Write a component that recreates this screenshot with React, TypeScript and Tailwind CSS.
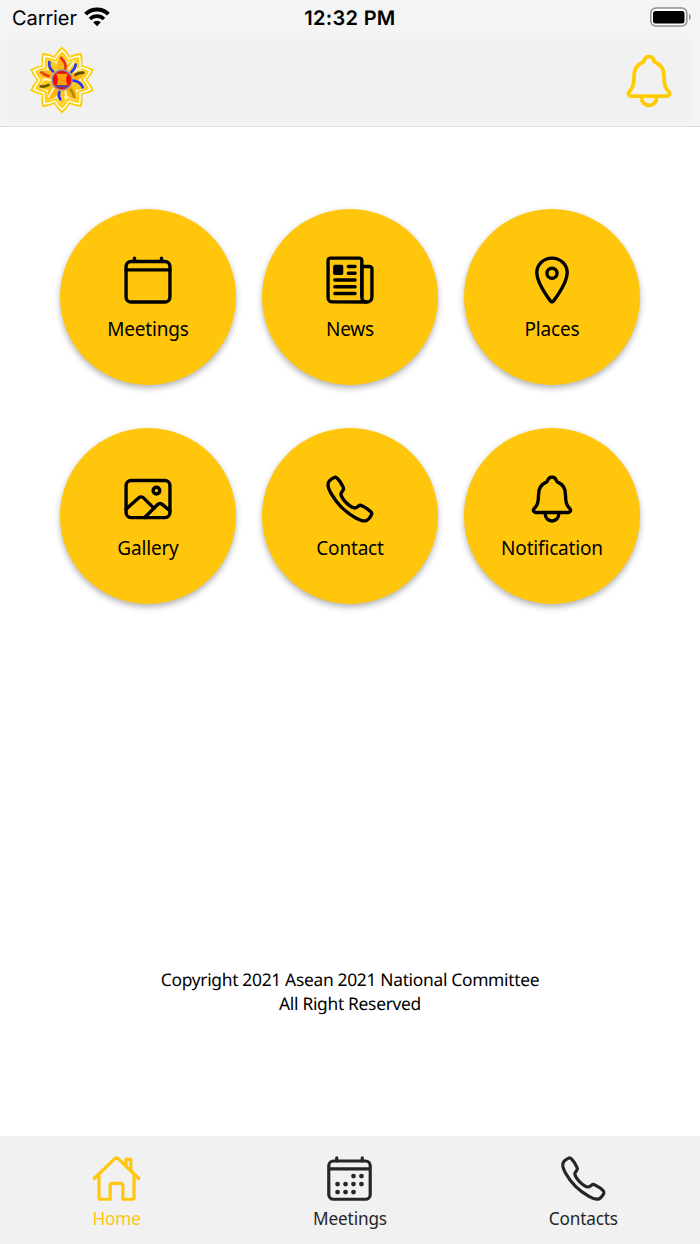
import type { IconType } from "react-icons";
import {
  IoCalendarClearOutline,
  IoCalendarOutline,
  IoCallOutline,
  IoHomeOutline,
  IoImageOutline,
  IoLocationOutline,
  IoNewspaperOutline,
  IoNotificationsOutline,
} from "react-icons/io5";

type Item = { label: string; icon: IconType };

const menu: Item[] = [
  { label: "Meetings", icon: IoCalendarClearOutline },
  { label: "News", icon: IoNewspaperOutline },
  { label: "Places", icon: IoLocationOutline },
  { label: "Gallery", icon: IoImageOutline },
  { label: "Contact", icon: IoCallOutline },
  { label: "Notification", icon: IoNotificationsOutline },
];

const tabs: Item[] = [
  { label: "Home", icon: IoHomeOutline },
  { label: "Meetings", icon: IoCalendarOutline },
  { label: "Contacts", icon: IoCallOutline },
];

const petals = [0, 36, 72, 108, 144, 180, 216, 252, 288, 324];

// star layers from the outside in
const rings = [
  { scale: 1.04, fill: "#fcd010" },
  { scale: 0.95, fill: "#ffffff" },
  { scale: 0.88, fill: "#fcd010" },
  { scale: 0.77, fill: "#fffbe6" },
];

const swooshes = [
  { d: "M-3 -66Q14 -50 10 -34", color: "#e8330c" },
  { d: "M41 -46Q40 -34 28 -24", color: "#2c36f0" },
  { d: "M64 -22Q50 -23 40 -15", color: "#5c4a0a" },
  { d: "M62 22Q54 4 34 2", color: "#2c36f0" },
  { d: "M36 50Q34 38 26 30", color: "#a58a14" },
  { d: "M-5 58Q-12 48 -8 36", color: "#2c36f0" },
  { d: "M-64 19Q-54 22 -40 15", color: "#6a5a08" },
  { d: "M-62 -23Q-54 -16 -40 -12", color: "#e0401c" },
  { d: "M-38 -54Q-40 -36 -27 -26", color: "#2c36f0" },
];

const highlights = [
  "M36 -54Q28 -44 20 -34",
  "M56 -34Q46 -32 36 -24",
  "M10 54Q14 44 10 34",
  "M-40 50Q-34 38 -26 26",
  "M-54 -4Q-44 0 -34 0",
];

const StatusBar = () => (
  <div className="grid h-[39px] grid-cols-3 items-start px-3 text-black">
    <div className="flex items-center gap-[7px] pt-[6px]">
      <span className="font-[Inter,sans-serif] text-[20px] leading-6 tracking-[-0.1px]">
        Carrier
      </span>
      <svg width="26" height="20" viewBox="0 0 26 20" fill="none" stroke="currentColor" className="-mt-[2px]">
        <path d="M1.6 7.2a16.2 16.2 0 0 1 22.8 0" strokeWidth="4" />
        <path d="M6 12a10 10 0 0 1 14 0" strokeWidth="3.6" />
        <path d="M13 19.2l-3.8-3.9a5.4 5.4 0 0 1 7.6 0z" fill="currentColor" stroke="none" />
      </svg>
    </div>
    <p className="pt-[6px] text-center font-[Inter,sans-serif] text-[20px] font-semibold leading-6 tracking-[0.3px]">
      12:32 PM
    </p>
    <div className="flex justify-end pt-[7px]">
      <svg width="42" height="20" viewBox="0 0 42 20" className="-mr-[4px]">
        <rect x="0.8" y="1" width="36" height="18" rx="5" fill="#fff" stroke="#8e8e8e" strokeWidth="1.5" />
        <rect x="3" y="4" width="31.5" height="12.5" rx="2.5" fill="#000" />
        <path d="M39 7c2.4 1 2.4 5 0 6z" fill="#8e8e8e" />
      </svg>
    </div>
  </div>
);

const Logo = () => (
  <svg width="68" height="68" viewBox="-102 -102 204 204" fill="none" className="-mt-px">
    {rings.map(({ scale, fill }) => (
      <g key={scale} transform={`scale(${scale})`} fill={fill}>
        {petals.map((angle) => (
          <path
            key={angle}
            transform={`rotate(${angle})`}
            d="M0 0L-22.5 -69Q-14 -85 0 -97Q14 -85 22.5 -69Z"
          />
        ))}
      </g>
    ))}
    <circle r="48" fill="#ffd84a" />
    {petals.map((angle) => (
      <path
        key={angle}
        transform={`rotate(${angle})`}
        d="M0 -15C-22 -38 -17 -58 0 -74C17 -58 22 -38 0 -15Z"
        fill={angle % 72 === 0 ? "#ffb50a" : "#fdc81c"}
      />
    ))}
    <g stroke="#fff0b0" strokeWidth="7" strokeLinecap="round">
      {highlights.map((d) => (
        <path key={d} d={d} />
      ))}
    </g>
    {swooshes.map(({ d, color }) => (
      <path key={d} d={d} stroke={color} strokeWidth="8" strokeLinecap="round" />
    ))}
    <circle r="30" fill="#f50a0a" stroke="#8893bd" strokeWidth="4" />
    <path d="M-17 -19H17Q8 0 17 15H-17Q-8 0 -17 -19Z" fill="#ffa005" />
    <path d="M-17 19H17" stroke="#3650bb" strokeWidth="6" />
  </svg>
);

const Header = () => (
  <header className="h-[127px] border-b border-[#dcdcdc] bg-[#f4f4f4]">
    <StatusBar />
    <div className="mx-[7px] flex h-[83px] items-center justify-between bg-[#f1f1f1] pl-[21px] pr-[14px]">
      <Logo />
      <button type="button" aria-label="Notifications" className="text-[#ffcc00]">
        <IoNotificationsOutline size={60} />
      </button>
    </div>
  </header>
);

const App = () => {
  return (
    <div className="flex h-[1244px] w-[700px] flex-col bg-white font-['Noto_Sans',sans-serif] [text-rendering:geometricPrecision]">
      <Header />

      <main className="flex flex-1 flex-col items-center pt-[82px]">
        <div className="grid grid-cols-3 gap-x-[26px] gap-y-[43px]">
          {menu.map(({ label, icon: Icon }) => (
            <button
              key={label}
              type="button"
              className="flex size-[176px] flex-col items-center rounded-full bg-[#ffc60b] pt-[43.5px] text-black shadow-[0_3px_6px_rgba(0,0,0,0.3)]"
            >
              <Icon size={54} />
              <span className="mt-[9px] text-[19px] leading-[26px] tracking-[-0.18px]">{label}</span>
            </button>
          ))}
        </div>

        <p className="mt-auto mb-[120px] text-center text-[17.4px] leading-[23.5px] tracking-[-0.31px] text-black">
          Copyright 2021 Asean 2021 National Committee
          <br />
          All Right Reserved
        </p>
      </main>

      <nav className="grid h-[108px] grid-cols-3 bg-[#f1f1f1]">
        {tabs.map(({ label, icon: Icon }, i) => (
          <button
            key={label}
            type="button"
            className={`flex flex-col items-center pt-[17px] ${
              i === 0 ? "text-[#ffc60b]" : "text-[#262626]"
            }`}
          >
            <Icon size={51} />
            <span className="mt-[2px] text-[17.2px] leading-[25px] tracking-[-0.15px]">{label}</span>
          </button>
        ))}
      </nav>
    </div>
  );
};

export default App;
